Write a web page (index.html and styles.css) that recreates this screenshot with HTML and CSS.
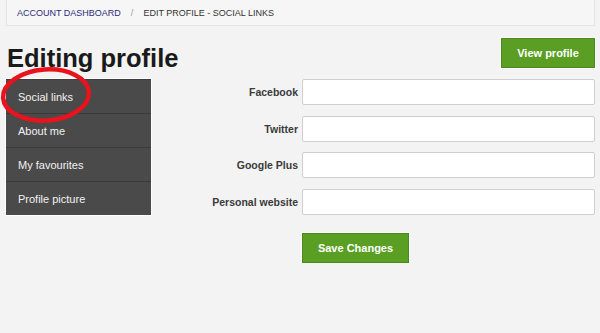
FILE: index.html
```html
<!DOCTYPE html>
<html lang="en">
<head>
  <meta charset="UTF-8" />
  <title>Edit profile - Social links</title>
  <link rel="stylesheet" href="styles.css">
</head>
<body>
  <!-- Breadcrumb -->
  <div class="breadcrumb">
    <a href="#" class="crumb-link">Account Dashboard</a>
    <span class="crumb-sep">/</span>
    <span class="crumb-current">Edit profile - Social links</span>
  </div>

  <div class="page-head">
    <h1 class="title">Editing profile</h1>
    <button class="btn btn-view">View profile</button>
  </div>

  <div class="content">
    <div class="sidebar">
      <a href="#" class="side-item">Social links</a>
      <a href="#" class="side-item">About me</a>
      <a href="#" class="side-item">My favourites</a>
      <a href="#" class="side-item">Profile picture</a>
      <!-- Red marker circle -->
      <svg class="marker" width="100" height="62" viewBox="0 0 100 62">
        <ellipse cx="46" cy="30" rx="43" ry="25.5" transform="rotate(-4 46 30)" fill="none" stroke="#e8131d" stroke-width="4.5" />
      </svg>
    </div>

    <form class="form">
      <div class="rows">
        <label class="label">Facebook</label>
        <input class="field" type="text" />
        <label class="label">Twitter</label>
        <input class="field" type="text" />
        <label class="label">Google Plus</label>
        <input class="field" type="text" />
        <label class="label">Personal website</label>
        <input class="field" type="text" />
      </div>
      <div class="actions">
        <button type="button" class="btn btn-save">Save Changes</button>
      </div>
    </form>
  </div>
</body>
</html>
```

FILE: styles.css
```css
body {
  margin: 0;
  padding: 0 5px 0 6px;
  background-color: #f3f3f3;
  font-family: 'Liberation Sans', Arial, sans-serif;
  color: #222;
}
/* Breadcrumb bar */
.breadcrumb {
  height: 25px;
  display: flex;
  align-items: center;
  padding-left: 10px;
  background-color: #f6f6f6;
  border: 1px solid #e4e4e4;
  border-top: none;
  font-size: 9px;
  text-transform: uppercase;
}
.crumb-link {
  color: #2c2c78;
  text-decoration: none;
}
.crumb-sep {
  color: #999;
  margin: 0 10px;
}
.crumb-current {
  color: #333;
}
/* Title + view button */
.page-head {
  display: flex;
  justify-content: space-between;
  align-items: flex-start;
  margin-top: 12px;
}
.title {
  margin: 5px 0 0 1px;
  font-size: 25.5px;
  line-height: 30px;
  font-weight: bold;
  color: #1a1a1a;
}
.btn {
  background-color: #5a9f24;
  border: 1px solid #4a8a1a;
  color: #fff;
  font-family: 'Liberation Sans', Arial, sans-serif;
  font-size: 11px;
  font-weight: bold;
  cursor: pointer;
  box-shadow: 0 0 0 1px #fff;
}
.btn-view {
  width: 94px;
  height: 30px;
}
/* Sidebar + form */
.content {
  display: flex;
  align-items: flex-start;
  margin-top: 6px;
}
.sidebar {
  position: relative;
  width: 145px;
  flex-shrink: 0;
  background-color: #4a4a4a;
  box-shadow: 0 0 0 1px #fff;
}
.side-item {
  display: flex;
  align-items: center;
  height: 33px;
  padding-left: 12px;
  border-top: 1px solid #3a3a3a;
  color: #f2f2f2;
  font-size: 11px;
  text-decoration: none;
}
.side-item:first-child {
  border-top: 1px solid #3e3e3e;
}
.marker {
  position: absolute;
  left: -6px;
  top: -14px;
}
.form {
  flex: 1;
}
.rows {
  display: grid;
  grid-template-columns: 147px 1fr;
  column-gap: 4px;
  row-gap: 10.7px;
  align-items: center;
}
.label {
  text-align: right;
  font-size: 10.5px;
  font-weight: bold;
  color: #3a3a3a;
}
.field {
  height: 26px;
  box-sizing: border-box;
  margin: 0;
  border: 1px solid #cfcfcf;
  border-radius: 2px;
  background-color: #fff;
}
.actions {
  padding-left: 151px;
  margin-top: 18px;
}
.btn-save {
  width: 107px;
  height: 30px;
}
```
